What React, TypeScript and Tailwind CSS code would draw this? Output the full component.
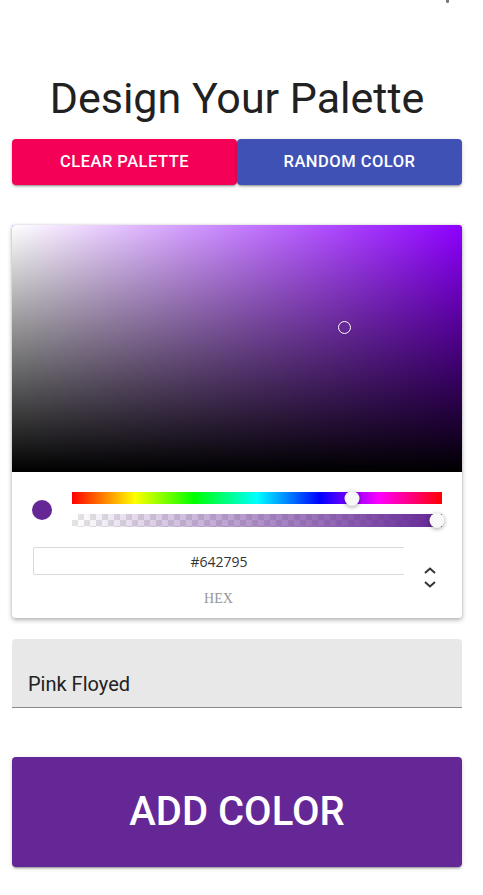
import React from 'react';

export default function App() {
  return (
    <div className="relative min-h-[895px] bg-white pl-3 pr-[21px] pt-[77px] font-['Roboto',_sans-serif]">
      {/* clipped chevron from the drawer header above */}
      <div className="absolute right-[34px] top-0 h-[3px] w-[3px] rounded-b-sm bg-[#777]" />

      <h1 className="text-center text-[43px] font-normal leading-[43px] text-[#212121]">
        Design Your Palette
      </h1>

      <div className="mt-[19px] flex h-[46px]">
        <button className="flex-1 rounded bg-[#f50057] text-[16.5px] font-medium uppercase tracking-[0.03em] text-white shadow-[0_3px_1px_-2px_rgba(0,0,0,0.2),0_2px_2px_0_rgba(0,0,0,0.14),0_1px_5px_0_rgba(0,0,0,0.12)]">
          Clear Palette
        </button>
        <button className="flex-1 rounded bg-[#3f51b5] text-[16.5px] font-medium uppercase tracking-[0.03em] text-white shadow-[0_3px_1px_-2px_rgba(0,0,0,0.2),0_2px_2px_0_rgba(0,0,0,0.14),0_1px_5px_0_rgba(0,0,0,0.12)]">
          Random Color
        </button>
      </div>

      <ColorPicker />

      <div className="mt-[21px] flex h-[69px] items-end rounded-t border-b border-[#8a8a8a] bg-[#e8e8e8] px-4 pb-[11px]">
        <span className="text-[20px] leading-[24px] text-[#212121]">Pink Floyed</span>
      </div>

      <button className="mt-[49px] flex h-[110px] w-full items-center justify-center rounded bg-[#642795] text-[40px] font-medium uppercase text-white shadow-[0_3px_1px_-2px_rgba(0,0,0,0.2),0_2px_2px_0_rgba(0,0,0,0.14),0_1px_5px_0_rgba(0,0,0,0.12)]">
        Add Color
      </button>
    </div>
  );
}

function ColorPicker() {
  return (
    <div className="mt-10 h-[393px] overflow-hidden rounded-[3px] bg-white shadow-[0_2px_5px_rgba(0,0,0,0.3),0_0_2px_rgba(0,0,0,0.15)]">
      {/* saturation area */}
      <div className="relative h-[247px] bg-[#8e00ff]">
        <div className="h-full bg-[linear-gradient(to_right,#fff,rgba(255,255,255,0))]">
          <div className="h-full bg-[linear-gradient(to_top,#000,rgba(0,0,0,0))]" />
        </div>
        <div className="absolute left-[326px] top-[96px] h-[13px] w-[13px] rounded-full border border-white shadow-[0_0_1px_rgba(0,0,0,0.4)]" />
      </div>

      <div className="flex items-center px-5 pt-5">
        <div className="h-5 w-5 shrink-0 rounded-full bg-[#642795]" />
        <div className="ml-5 flex flex-1 flex-col gap-[10px]">
          <div className="relative h-3 bg-[linear-gradient(to_right,#f00_0%,#ff0_17%,#0f0_33%,#0ff_50%,#00f_67%,#f0f_83%,#f00_100%)]">
            <Thumb left="280px" top="-1px" />
          </div>
          <div className="relative h-[13px] bg-[conic-gradient(#e4e4e4_25%,#fff_0_50%,#e4e4e4_0_75%,#fff_0)] bg-[length:12px_12px]">
            <div className="h-full bg-[linear-gradient(to_right,rgba(100,39,149,0),#642795)]" />
            <Thumb left="365px" top="-1px" />
          </div>
        </div>
      </div>

      <div className="mt-5 flex pl-[21px]">
        <div className="flex w-[371px] flex-col items-center">
          <div className="flex h-[28px] w-full items-center justify-center rounded-l-[2px] border border-r-0 border-[#dadada] font-['Open_Sans',_sans-serif] text-[14px] text-[#333]">
            #642795
          </div>
          <div className="mt-[17px] font-['Liberation_Serif',_serif] text-[14px] leading-[14px] text-[#969696]">
            HEX
          </div>
        </div>
        <div className="flex flex-1 flex-col items-center pr-[6px] pt-[20px]">
          <svg width="12" height="7" viewBox="0 0 12 7" fill="none" stroke="#333" strokeWidth="2">
            <path d="M1 6 L6 1.5 L11 6" />
          </svg>
          <svg className="mt-[7px]" width="12" height="7" viewBox="0 0 12 7" fill="none" stroke="#333" strokeWidth="2">
            <path d="M1 1 L6 5.5 L11 1" />
          </svg>
        </div>
      </div>
    </div>
  );
}

function Thumb({ left, top }: { left: string; top: string }) {
  return (
    <div
      className="absolute h-[15px] w-[15px] -translate-x-1/2 rounded-full bg-[#f8f8f8] shadow-[0_1px_4px_rgba(0,0,0,0.37)]"
      style={{ left, top }}
    />
  );
}
